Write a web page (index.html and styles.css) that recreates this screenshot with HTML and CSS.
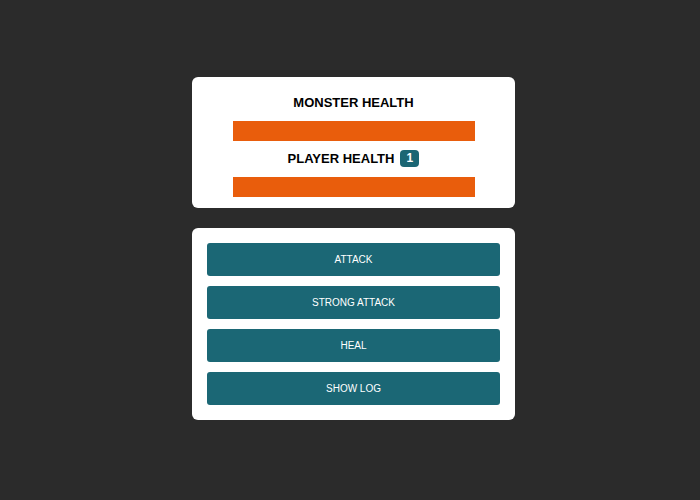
FILE: index.html
```html
<!DOCTYPE html>
<html lang="en">

<head>
    <meta charset="UTF-8">
    <meta name="viewport" content="width=device-width, initial-scale=1.0">
    <title>Monster Killer</title>
    <link rel="stylesheet" href="styles.css">
</head>

<body>
    <section class="card health">
        <h2 class="label">MONSTER HEALTH</h2>
        <div class="bar"></div>
        <h2 class="label">PLAYER HEALTH <span class="bonus-life">1</span></h2>
        <div class="bar"></div>
    </section>

    <section class="card controls">
        <button class="btn">ATTACK</button>
        <button class="btn">STRONG ATTACK</button>
        <button class="btn">HEAL</button>
        <button class="btn">SHOW LOG</button>
    </section>
</body>

</html>
```

FILE: styles.css
```css
html {
    background-color: #2b2b2b;
}

body {
    margin: 0;
    padding: 77px 0 0 7px;
    font-family: "Liberation Sans", Arial, sans-serif;
    display: flex;
    flex-direction: column;
    align-items: center;
    gap: 20px;
}

.card {
    box-sizing: border-box;
    width: 323px;
    background: #fff;
    border-radius: 6px;
}

.health {
    padding: 18px 0 11px;
    display: flex;
    flex-direction: column;
    align-items: center;
}

.label {
    margin: 0;
    font-size: 13px;
    line-height: 16px;
    font-weight: bold;
    color: #000;
    display: flex;
    align-items: center;
    gap: 6px;
}

.label + .bar + .label {
    margin-top: 9px;
    line-height: 17px;
}

.bar {
    width: 242px;
    height: 20px;
    margin-top: 10px;
    background-color: #e95d0c;
}

.bonus-life {
    display: inline-block;
    min-width: 19px;
    height: 17px;
    line-height: 17px;
    border-radius: 4px;
    background-color: #1b6674;
    color: #fff;
    text-align: center;
    font-size: 12px;
    font-weight: bold;
}

.controls {
    padding: 15px;
    display: flex;
    flex-direction: column;
    gap: 10px;
}

.btn {
    height: 33px;
    border: none;
    border-radius: 3px;
    background-color: #1b6775;
    color: #fff;
    font-family: "Liberation Sans", Arial, sans-serif;
    font-size: 10px;
    cursor: pointer;
}
```
